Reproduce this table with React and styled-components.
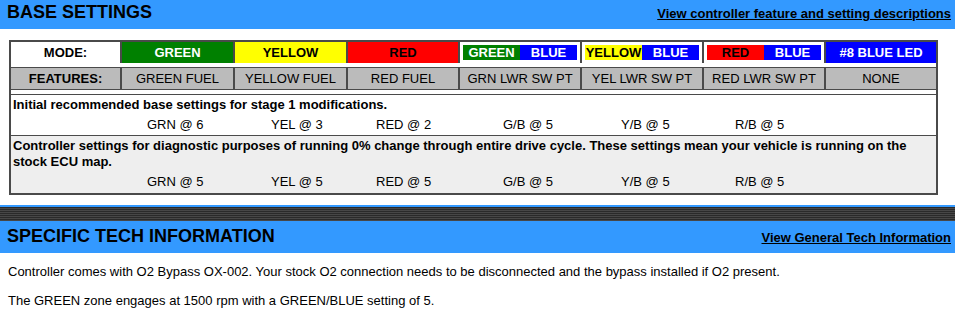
import React from "react";
import styled, { createGlobalStyle } from "styled-components";

const Global = createGlobalStyle`
  html, body { margin: 0; padding: 0; background: #fff; }
  body {
    font-family: "Liberation Sans", Arial, sans-serif;
    font-size: 13px;
    color: #000;
    width: 955px;
    overflow: hidden;
  }
`;

const BORDER = "#4a4a4a";

const SectionHeader = styled.div`
  box-sizing: border-box;
  height: 32px;
  margin-top: ${(p) => (p.$scrolled ? "-3px" : "0")};
  padding: 5px 4px 0 7px;
  background: #3399ff;
  display: flex;
  align-items: baseline;
  justify-content: space-between;
`;

const Title = styled.h2`
  margin: 0;
  font-size: 18px;
  font-weight: bold;
  line-height: 21px;
`;

const HeaderLink = styled.a`
  color: #000;
  font-size: 13px;
  font-weight: bold;
  text-decoration: underline;
  cursor: pointer;
`;

const Table = styled.div`
  box-sizing: border-box;
  width: 929px;
  margin: 11px 0 10px 9px;
  border: 2px solid ${BORDER};
  background: #fff;
`;

const COLS = "111px 113px 113px 112px 122px 122px 122px 110px";

const Row = styled.div`
  display: grid;
  grid-template-columns: ${COLS};
  height: ${(p) => p.$h}px;
  border-bottom: 1px solid ${BORDER};
`;

const Spacer = styled.div`
  height: 4px;
  border-bottom: 1px solid ${BORDER};
`;

const Cell = styled.div`
  box-sizing: border-box;
  display: flex;
  align-items: center;
  justify-content: center;
  border-right: 2px solid ${BORDER};
  background: ${(p) => p.$bg || "#fff"};
  color: ${(p) => p.$fg || "#000"};
  font-weight: ${(p) => (p.$bold ? "bold" : "normal")};
  white-space: nowrap;
  &:last-child { border-right: none; }
`;

const SplitCell = styled.div`
  box-sizing: border-box;
  display: flex;
  padding: 3px;
  border-right: 2px solid ${BORDER};
  background: #fff;
`;

const Half = styled.div`
  flex: 1;
  display: flex;
  align-items: center;
  justify-content: center;
  background: ${(p) => p.$bg};
  color: ${(p) => p.$fg};
  font-weight: bold;
  white-space: nowrap;
`;

const InfoRow = styled.div`
  box-sizing: border-box;
  padding: 2px 2px 2px 2px;
  height: ${(p) => p.$h}px;
  background: ${(p) => p.$bg};
  border-bottom: ${(p) => (p.$last ? "none" : `1px solid ${BORDER}`)};
`;

const InfoText = styled.div`
  font-weight: bold;
  line-height: 16px;
`;

const Values = styled.div`
  display: grid;
  grid-template-columns: 124px 105px 127px 118px 114px auto;
  margin: 4px 0 0 134px;
  line-height: 16px;
`;

const Divider = styled.div`
  height: 14px;
  border-top: 2px solid #3399ff;
  background: repeating-linear-gradient(
    to bottom,
    #2a2a2a 0px,
    #2a2a2a 1px,
    #474747 1px,
    #474747 2px
  );
`;

const Content = styled.div`
  padding: 11px 8px 0 8px;
`;

const P = styled.p`
  margin: 0 0 14px 0;
  line-height: 15px;
`;

const modes = [
  { t: "GREEN", bg: "#008000", fg: "#fff" },
  { t: "YELLOW", bg: "#ffff00", fg: "#000" },
  { t: "RED", bg: "#ff0000", fg: "#000" },
];

const splits = [
  [{ t: "GREEN", bg: "#008000", fg: "#fff" }, { t: "BLUE", bg: "#0000ff", fg: "#fff" }],
  [{ t: "YELLOW", bg: "#ffff00", fg: "#000" }, { t: "BLUE", bg: "#0000ff", fg: "#fff" }],
  [{ t: "RED", bg: "#ff0000", fg: "#000" }, { t: "BLUE", bg: "#0000ff", fg: "#fff" }],
];

const features = [
  "GREEN FUEL",
  "YELLOW FUEL",
  "RED FUEL",
  "GRN LWR SW PT",
  "YEL LWR SW PT",
  "RED LWR SW PT",
  "NONE",
];

const ValueList = ({ vals }) => (
  <Values>
    {["GRN", "YEL", "RED", "G/B", "Y/B", "R/B"].map((k, i) => (
      <span key={k}>
        {k} @ {vals[i]}
      </span>
    ))}
  </Values>
);

export default function App() {
  return (
    <>
      <Global />
      <SectionHeader $scrolled>
        <Title>BASE SETTINGS</Title>
        <HeaderLink>View controller feature and setting descriptions</HeaderLink>
      </SectionHeader>

      <Table>
        <Row $h={20}>
          <Cell $bold>MODE:</Cell>
          {modes.map((m) => (
            <Cell key={m.t} $bold $bg={m.bg} $fg={m.fg}>
              {m.t}
            </Cell>
          ))}
          {splits.map((s, i) => (
            <SplitCell key={i}>
              {s.map((h) => (
                <Half key={h.t} $bg={h.bg} $fg={h.fg}>
                  {h.t}
                </Half>
              ))}
            </SplitCell>
          ))}
          <Cell $bold $bg="#0000ff" $fg="#fff">
            #8 BLUE LED
          </Cell>
        </Row>
        <Spacer />
        <Row $h={21}>
          <Cell $bold $bg="#bbbbbb">
            FEATURES:
          </Cell>
          {features.map((f) => (
            <Cell key={f} $bg="#bbbbbb">
              {f}
            </Cell>
          ))}
        </Row>
        <Spacer />
        <InfoRow $h={41} $bg="#fff">
          <InfoText>Initial recommended base settings for stage 1 modifications.</InfoText>
          <ValueList vals={[6, 3, 2, 5, 5, 5]} />
        </InfoRow>
        <InfoRow $h={57} $bg="#eeeeee" $last>
          <InfoText>
            Controller settings for diagnostic purposes of running 0% change through entire drive
            cycle. These settings mean your vehicle is running on the
            <br />
            stock ECU map.
          </InfoText>
          <ValueList vals={[5, 5, 5, 5, 5, 5]} />
        </InfoRow>
      </Table>

      <Divider />
      <SectionHeader>
        <Title>SPECIFIC TECH INFORMATION</Title>
        <HeaderLink>View General Tech Information</HeaderLink>
      </SectionHeader>

      <Content>
        <P>
          Controller comes with O2 Bypass OX-002. Your stock O2 connection needs to be disconnected
          and the bypass installed if O2 present.
        </P>
        <P>The GREEN zone engages at 1500 rpm with a GREEN/BLUE setting of 5.</P>
      </Content>
    </>
  );
}
